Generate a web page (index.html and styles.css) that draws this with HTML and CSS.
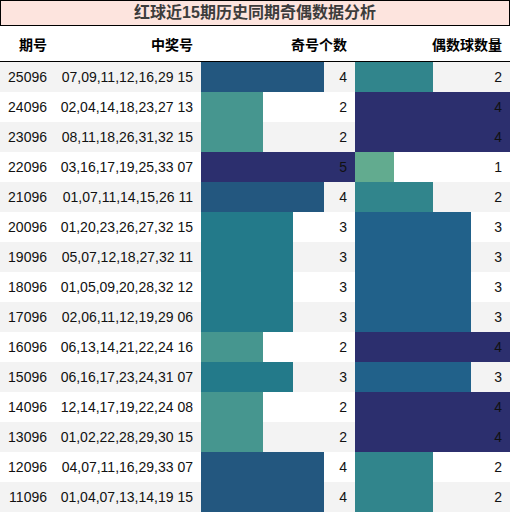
FILE: index.html
```html
<!DOCTYPE html>
<html lang="zh-CN">
<head>
    <meta charset="UTF-8">
    <meta name="viewport" content="width=device-width, initial-scale=1.0">
    <title>红球近15期历史同期奇偶数据分析</title>
    <link rel="stylesheet" href="styles.css">
</head>
<body>
    <div class="report">
        <div class="report-title">红球近15期历史同期奇偶数据分析</div>

        <div class="table">
            <div class="row head">
                <div class="cell">期号</div>
                <div class="cell">中奖号</div>
                <div class="cell">奇号个数</div>
                <div class="cell">偶数球数量</div>
            </div>

            <div class="row">
                <div class="cell">25096</div>
                <div class="cell">07,09,11,12,16,29 15</div>
                <div class="cell bar-cell"><div class="bar odd-4" style="width: 80%"></div><span class="val">4</span></div>
                <div class="cell bar-cell"><div class="bar even-2" style="width: 50%"></div><span class="val">2</span></div>
            </div>
            <div class="row">
                <div class="cell">24096</div>
                <div class="cell">02,04,14,18,23,27 13</div>
                <div class="cell bar-cell"><div class="bar odd-2" style="width: 40%"></div><span class="val">2</span></div>
                <div class="cell bar-cell"><div class="bar even-4" style="width: 100%"></div><span class="val">4</span></div>
            </div>
            <div class="row">
                <div class="cell">23096</div>
                <div class="cell">08,11,18,26,31,32 15</div>
                <div class="cell bar-cell"><div class="bar odd-2" style="width: 40%"></div><span class="val">2</span></div>
                <div class="cell bar-cell"><div class="bar even-4" style="width: 100%"></div><span class="val">4</span></div>
            </div>
            <div class="row">
                <div class="cell">22096</div>
                <div class="cell">03,16,17,19,25,33 07</div>
                <div class="cell bar-cell"><div class="bar odd-5" style="width: 100%"></div><span class="val">5</span></div>
                <div class="cell bar-cell"><div class="bar even-1" style="width: 25%"></div><span class="val">1</span></div>
            </div>
            <div class="row">
                <div class="cell">21096</div>
                <div class="cell">01,07,11,14,15,26 11</div>
                <div class="cell bar-cell"><div class="bar odd-4" style="width: 80%"></div><span class="val">4</span></div>
                <div class="cell bar-cell"><div class="bar even-2" style="width: 50%"></div><span class="val">2</span></div>
            </div>
            <div class="row">
                <div class="cell">20096</div>
                <div class="cell">01,20,23,26,27,32 15</div>
                <div class="cell bar-cell"><div class="bar odd-3" style="width: 60%"></div><span class="val">3</span></div>
                <div class="cell bar-cell"><div class="bar even-3" style="width: 75%"></div><span class="val">3</span></div>
            </div>
            <div class="row">
                <div class="cell">19096</div>
                <div class="cell">05,07,12,18,27,32 11</div>
                <div class="cell bar-cell"><div class="bar odd-3" style="width: 60%"></div><span class="val">3</span></div>
                <div class="cell bar-cell"><div class="bar even-3" style="width: 75%"></div><span class="val">3</span></div>
            </div>
            <div class="row">
                <div class="cell">18096</div>
                <div class="cell">01,05,09,20,28,32 12</div>
                <div class="cell bar-cell"><div class="bar odd-3" style="width: 60%"></div><span class="val">3</span></div>
                <div class="cell bar-cell"><div class="bar even-3" style="width: 75%"></div><span class="val">3</span></div>
            </div>
            <div class="row">
                <div class="cell">17096</div>
                <div class="cell">02,06,11,12,19,29 06</div>
                <div class="cell bar-cell"><div class="bar odd-3" style="width: 60%"></div><span class="val">3</span></div>
                <div class="cell bar-cell"><div class="bar even-3" style="width: 75%"></div><span class="val">3</span></div>
            </div>
            <div class="row">
                <div class="cell">16096</div>
                <div class="cell">06,13,14,21,22,24 16</div>
                <div class="cell bar-cell"><div class="bar odd-2" style="width: 40%"></div><span class="val">2</span></div>
                <div class="cell bar-cell"><div class="bar even-4" style="width: 100%"></div><span class="val">4</span></div>
            </div>
            <div class="row">
                <div class="cell">15096</div>
                <div class="cell">06,16,17,23,24,31 07</div>
                <div class="cell bar-cell"><div class="bar odd-3" style="width: 60%"></div><span class="val">3</span></div>
                <div class="cell bar-cell"><div class="bar even-3" style="width: 75%"></div><span class="val">3</span></div>
            </div>
            <div class="row">
                <div class="cell">14096</div>
                <div class="cell">12,14,17,19,22,24 08</div>
                <div class="cell bar-cell"><div class="bar odd-2" style="width: 40%"></div><span class="val">2</span></div>
                <div class="cell bar-cell"><div class="bar even-4" style="width: 100%"></div><span class="val">4</span></div>
            </div>
            <div class="row">
                <div class="cell">13096</div>
                <div class="cell">01,02,22,28,29,30 15</div>
                <div class="cell bar-cell"><div class="bar odd-2" style="width: 40%"></div><span class="val">2</span></div>
                <div class="cell bar-cell"><div class="bar even-4" style="width: 100%"></div><span class="val">4</span></div>
            </div>
            <div class="row">
                <div class="cell">12096</div>
                <div class="cell">04,07,11,16,29,33 07</div>
                <div class="cell bar-cell"><div class="bar odd-4" style="width: 80%"></div><span class="val">4</span></div>
                <div class="cell bar-cell"><div class="bar even-2" style="width: 50%"></div><span class="val">2</span></div>
            </div>
            <div class="row">
                <div class="cell">11096</div>
                <div class="cell">01,04,07,13,14,19 15</div>
                <div class="cell bar-cell"><div class="bar odd-4" style="width: 80%"></div><span class="val">4</span></div>
                <div class="cell bar-cell"><div class="bar even-2" style="width: 50%"></div><span class="val">2</span></div>
            </div>
        </div>
    </div>
</body>
</html>
```

FILE: styles.css
```css
body {
    margin: 0;
    background-color: #fff;
    font-family: "Liberation Sans", "Noto Sans CJK SC", sans-serif;
    color: #111;
}

.report {
    width: 510px;
}

.report-title {
    height: 24px;
    line-height: 24px;
    border: 1px solid #000;
    background-color: #fde4de;
    color: #3c3c3c;
    font-size: 16px;
    font-weight: bold;
    text-align: center;
}

.table {
    display: flex;
    flex-direction: column;
}

.row {
    display: grid;
    grid-template-columns: 55px 146px 154px 1fr;
    height: 30px;
    font-size: 14px;
}

.row:nth-child(even) {
    background-color: #f3f3f3;
}

.row.head {
    height: 35px;
    border-bottom: 1px solid #000;
    font-weight: bold;
    color: #000;
}

.cell {
    display: flex;
    align-items: center;
    justify-content: flex-end;
    padding-right: 8px;
    white-space: nowrap;
}

.bar-cell {
    display: grid;
    padding-right: 0;
    justify-content: stretch;
    align-items: stretch;
}

.bar,
.val {
    grid-area: 1 / 1;
}

.bar {
    height: 100%;
}

.val {
    display: flex;
    align-items: center;
    justify-content: flex-end;
    padding-right: 8px;
}

/* odd count colours */
.odd-5 { background-color: #2c2f6e; }
.odd-4 { background-color: #23577f; }
.odd-3 { background-color: #237a8a; }
.odd-2 { background-color: #46968f; }

/* even count colours */
.even-4 { background-color: #2c2f6e; }
.even-3 { background-color: #21618a; }
.even-2 { background-color: #31858c; }
.even-1 { background-color: #62ab8f; }
```
